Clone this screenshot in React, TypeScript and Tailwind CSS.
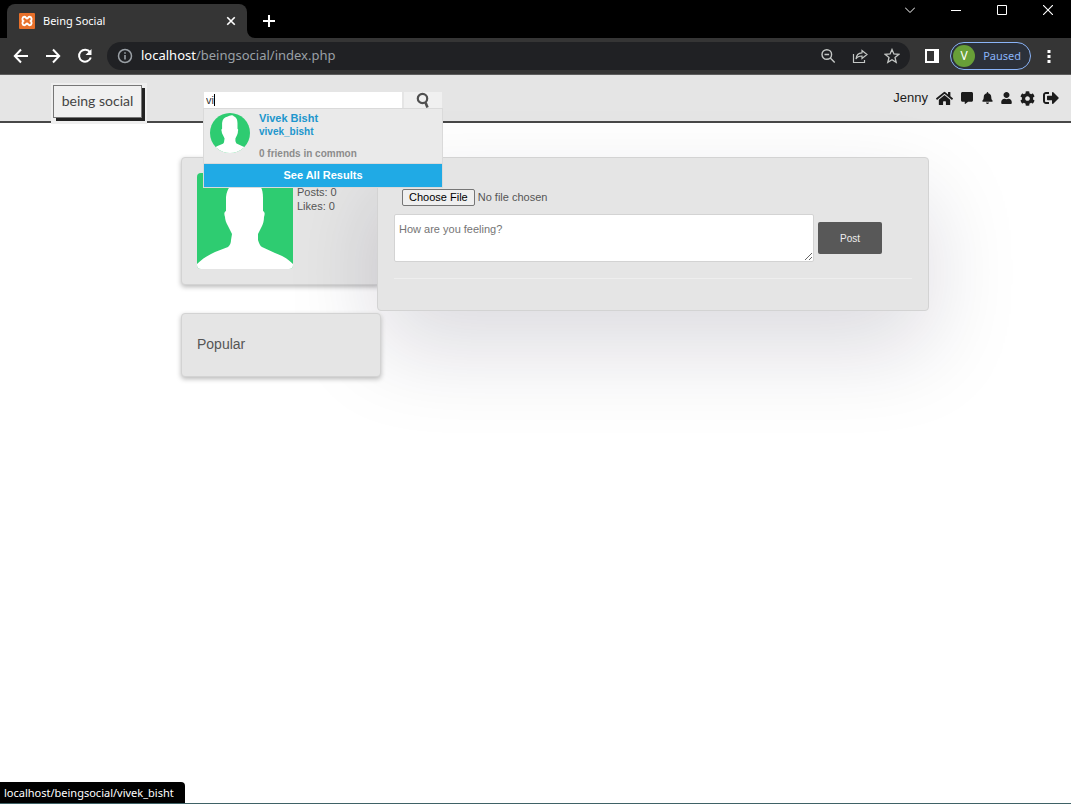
import React from 'react';
import {
  FaBell,
  FaCog,
  FaCommentAlt,
  FaHome,
  FaSignOutAlt,
  FaUser,
} from 'react-icons/fa';

function Avatar({ className }: { className: string }) {
  return (
    <svg viewBox="0 0 96 96" className={className} role="img" aria-label="Profile picture">
      <rect width="96" height="96" fill="#2ecc71" />
      <path
        fill="#fff"
        d="M29 24C30 15 34 11 41 9C47 6 54 3 57 8C63 11 66 15 66 25L66 38C68 39 68 41 67 44C67 48 66 51 65 53L61 61V67C62 70 63 73 65 74L78 80C86 83 91 86 96 91V96H0V91C5 86 10 83 18 79L31 74C33 72 34 70 34 67L35 61L31 53C29 50 28 46 28 44C27 41 27 39 29 38Z"
      />
    </svg>
  );
}

function Icon({ children, className = 'size-4' }: { children: React.ReactNode; className?: string }) {
  return (
    <svg
      viewBox="0 0 16 16"
      className={className}
      fill="none"
      stroke="currentColor"
      strokeWidth="2"
      aria-hidden="true"
    >
      {children}
    </svg>
  );
}

function TabStrip() {
  return (
    <div className="flex h-[38px] items-end bg-black pl-[7px] text-white">
      <div className="relative flex h-[34px] w-60 items-center rounded-t-lg bg-[#353535] pr-[11px] pl-3">
        <svg viewBox="0 0 16 16" className="size-4" aria-hidden="true">
          <rect width="16" height="16" rx="1" fill="#e8702a" />
          <path
            d="M5.3 3.8C3 3.8 3 7 4.3 8C3 9 3 12.2 5.3 12.2C7 12.2 7 10.5 8 10.5S9 12.2 10.7 12.2C13 12.2 13 9 11.7 8C13 7 13 3.8 10.7 3.8C9 3.8 9 5.5 8 5.5S7 3.8 5.300 3.8Z"
            fill="none"
            stroke="#fff"
            strokeWidth="1.900"
          />
        </svg>
        <span className="ml-2 flex-1 text-[11px]">Being Social</span>
        <button aria-label="Close tab">
          <Icon className="size-[10px]">
            <path d="M2 2l12 12M14 2L2 14" strokeWidth="2.600" />
          </Icon>
        </button>
        <svg viewBox="0 0 8 8" className="absolute bottom-0 left-full size-2" aria-hidden="true">
          <path d="M0 0A8 8 0 0 0 8 8H0Z" fill="#353535" />
        </svg>
      </div>
      <button aria-label="New tab" className="mb-[11px] ml-4">
        <Icon className="size-3">
          <path d="M8 0v16M0 8h16" strokeWidth="2.700" />
        </Icon>
      </button>
      <div className="ml-auto flex h-full items-start gap-9 pt-[5px] pr-[18px]">
        <button aria-label="Search tabs">
          <Icon className="size-[10px]">
            <path d="M0 4l8 8 8-8" strokeWidth="1.600" />
          </Icon>
        </button>
        <button aria-label="Minimize">
          <Icon className="size-[10px]">
            <path d="M0 8.800h16" strokeWidth="1.600" />
          </Icon>
        </button>
        <button aria-label="Maximize">
          <Icon className="size-[10px]">
            <path d="M.8.800h14.400v14.400H.8z" strokeWidth="1.600" />
          </Icon>
        </button>
        <button aria-label="Close">
          <Icon className="size-[10px]">
            <path d="M0 0l16 16M16 0L0 16" strokeWidth="1.800" />
          </Icon>
        </button>
      </div>
    </div>
  );
}

function Toolbar() {
  return (
    <div className="flex h-[37px] items-center border-b border-[#5c5c5c] bg-[#353535] pr-[20px] pl-[13px] text-white">
      <div className="flex items-center gap-4">
        <button aria-label="Back">
          <Icon>
            <path d="M15 8H2M8 1.500L1.800 8 8 14.500" />
          </Icon>
        </button>
        <button aria-label="Forward">
          <Icon>
            <path d="M1 8h13M8 1.500L14.200 8 8 14.500" />
          </Icon>
        </button>
        <button aria-label="Reload">
          <Icon>
            <path d="M13 4.200A6 6 0 1 0 13.800 9.500" />
            <path d="M14.500 1v6h-6z" fill="currentColor" stroke="none" />
          </Icon>
        </button>
      </div>
      <div className="ml-[14px] flex h-7 flex-1 items-center rounded-full bg-[#202124] pr-[10px] pl-[10px] text-[#c4c7c5]">
        <svg viewBox="0 0 16 16" className="size-4" fill="none" stroke="#9aa0a6" strokeWidth="1.500" aria-hidden="true">
          <circle cx="8" cy="8" r="6.500" />
          <path d="M8 7v4.500M8 4.300v1.500" strokeWidth="1.600" />
        </svg>
        <span className="ml-2 flex-1 text-[13px] text-[#9aa0a6]">
          <span className="text-white">localhost</span>/beingsocial/index.php
        </span>
        <div className="flex items-center gap-4">
          <button aria-label="Zoom">
            <Icon>
              <circle cx="6.800" cy="6.500" r="4.800" strokeWidth="1.400" />
              <path d="M10.300 10l4.400 4.500M4.500 6.500h4.600" strokeWidth="1.400" />
            </Icon>
          </button>
          <button aria-label="Share">
            <Icon>
              <path d="M1.500 6v8.500h11V12" strokeWidth="1.200" />
              <path d="M10 2.500l5 4-5 4V8C7 8 5 9 4 11c.300-4 2.500-6 6-6.200z" strokeWidth="1.200" />
            </Icon>
          </button>
          <button aria-label="Bookmark">
            <Icon>
              <path d="M8 1.500l1.900 4.500 4.800.4-3.700 3.100 1.200 4.800L8 11.700l-4.200 2.600L5 9.500 1.300 6.400 6.100 6z" strokeWidth="1.300" />
            </Icon>
          </button>
        </div>
      </div>
      <button aria-label="Side panel" className="ml-[15px]">
        <svg viewBox="0 0 14 14" className="size-[14px]" aria-hidden="true">
          <path d="M1 1h12v12H1z" fill="none" stroke="#fff" strokeWidth="2" />
          <path d="M9 1h4v12H9z" fill="#fff" />
        </svg>
      </button>
      <button className="ml-[11px] flex h-7 items-center gap-2 rounded-full border border-[#8ab4f8] bg-[#2c313a] pr-[9px] pl-[2px] text-[11px] text-[#8ab4f8]">
        <span className="grid size-[22px] place-items-center rounded-full bg-[#689f38] text-xs text-white">V</span>
        Paused
      </button>
      <button aria-label="Menu" className="ml-4">
        <svg viewBox="0 0 4 16" className="h-4 w-1" fill="#fff" aria-hidden="true">
          <path d="M.5 2h3v3h-3zM.5 7h3v3h-3zM.5 12h3v3h-3z" />
        </svg>
      </button>
    </div>
  );
}

function Search() {
  return (
    <form className="relative ml-[57px] w-[238px]" onSubmit={(e) => e.preventDefault()}>
      <div className="flex h-4 gap-[2px]">
        <div className="flex min-w-0 flex-1 items-center bg-white pl-[2px]">
          <input
            type="text"
            aria-label="Search"
            defaultValue="vi"
            autoComplete="off"
            className="h-4 bg-transparent text-[11px] text-[#333] outline-none [field-sizing:content]"
          />
          <span className="h-3 w-px bg-black" />
        </div>
        <button aria-label="Search" className="grid w-[38px] place-items-center bg-[#f0f0f0]">
          <svg viewBox="0 0 14 16" className="h-4 w-[14px]" fill="none" stroke="#505050" aria-hidden="true">
            <circle cx="6.500" cy="6.500" r="4.700" strokeWidth="2.200" />
            <path d="M9.500 10.500l2 5" strokeWidth="2.600" />
          </svg>
        </button>
      </div>
      <div className="absolute top-4 -right-px -left-px z-30 border border-[#dadada] bg-[#eaeaea] font-bold">
        <a href="#vivek_bisht" className="flex h-[54px] gap-2 pt-1 pl-[6px]">
          <Avatar className="size-10 rounded-full" />
          <span className="-mt-px flex flex-col pl-px text-[10px] leading-[14px] text-[#2096cd]">
            <span className="-mt-px text-[11px]">Vivek Bisht</span>
            <span>vivek_bisht</span>
            <span className="mt-2 text-[#8c8c8c]">0 friends in common</span>
          </span>
        </a>
        <a
          href="#results"
          className="block border-t border-[#dadada] bg-[#20aae5] text-center text-[11px] leading-[23px] text-white"
        >
          See All Results
        </a>
      </div>
    </form>
  );
}

function SiteHeader() {
  return (
    <header className="flex h-12 items-start border-b-2 border-[#484848] bg-[#e5e5e5] pr-[12px] pl-[51px]">
      <a href="#home" className="mt-2 h-[41px] w-24 bg-[#efefef] pt-[2px] pl-[2px]">
        <span className="block h-[33px] w-[89px] border border-[#777] bg-[#f0f0f0] text-center [font-family:Lato,sans-serif] text-[14px] leading-[30px] text-[#444] shadow-[3px_3px_0_#222]">
          being social
        </span>
      </a>
      <div className="pt-[17px]">
        <Search />
      </div>
      <nav className="ml-auto flex h-[46px] items-center text-[#1c1c1c]">
        <a href="#jenny" className="mr-2 text-[13px]">
          Jenny
        </a>
        <a href="#home" aria-label="Home" className="mr-2">
          <FaHome className="size-[17px]" />
        </a>
        <a href="#messages" aria-label="Messages" className="mr-[9px]">
          <FaCommentAlt className="size-3" />
        </a>
        <a href="#notifications" aria-label="Notifications" className="mr-2">
          <FaBell className="h-3 w-[11px]" />
        </a>
        <a href="#requests" aria-label="Friend requests" className="mr-2">
          <FaUser className="h-3 w-[11px]" />
        </a>
        <a href="#settings" aria-label="Settings" className="mr-2">
          <FaCog className="size-[15px]" />
        </a>
        <a href="#logout" aria-label="Log out">
          <FaSignOutAlt className="size-4" />
        </a>
      </nav>
    </header>
  );
}

export default function App() {
  return (
    <div className="flex min-h-screen flex-col border-b border-[#3f6266] bg-white font-['Liberation_Sans',Arial,sans-serif] text-[#555] [&_button]:shrink-0">
      <div className="font-['Noto_Sans','Open_Sans',sans-serif]">
        <TabStrip />
        <Toolbar />
      </div>
      <SiteHeader />
      <div className="flex flex-1 pl-[39px]">
        <main className="mx-auto mt-[34px] flex w-full max-w-[748px] items-start">
          <aside className="w-[200px] shrink-0">
            <section className="flex h-32 gap-1 rounded-sm border border-[#d3d3d3] bg-[#e5e5e5] p-[15px] text-[11px] leading-[14px] shadow-[0_2px_5px_#b9b9b9]">
              <Avatar className="size-24 rounded-sm" />
              <div className="pt-3">
                <p>Posts: 0</p>
                <p>Likes: 0</p>
              </div>
            </section>
            <section className="relative z-20 mt-7 h-16 rounded-sm border border-[#d3d3d3] bg-[#e5e5e5] px-[15px] shadow-[0_2px_5px_#b9b9b9]">
              <h2 className="text-[14px] leading-[61px]">Popular</h2>
            </section>
          </aside>
          <section className="relative z-10 -ml-1 h-[154px] min-w-0 flex-1 rounded-sm border border-[#d3d3d3] bg-[#e5e5e5] px-4 pt-[29px] text-[11px] shadow-[0_38px_90px_rgba(17,12,46,0.15)]">
            <form onSubmit={(e) => e.preventDefault()}>
              <input
                type="file"
                aria-label="Photo"
                className="ml-2 block h-5 leading-5 file:mr-[3px] file:h-[17px] file:rounded-xs file:border file:border-solid file:border-[#767676] file:bg-[#efefef] file:px-[6px] file:text-[11px] file:leading-[15px] file:text-black"
              />
              <div className="mt-[7px] flex items-center gap-1">
                <textarea
                  aria-label="Post text"
                  placeholder="How are you feeling?"
                  className="block h-12 w-[420px] min-w-0 resize rounded-xs border border-[#d3d3d3] bg-white px-1 pt-[7px] leading-[14px] placeholder:text-[#757575]"
                />
                <button className="h-8 w-16 rounded-xs bg-[#585858] text-[10px] text-[#eee]">Post</button>
              </div>
            </form>
            <hr className="mt-4 border-[#eee]" />
          </section>
        </main>
      </div>
      <div className="relative z-30 self-start rounded-tr-sm bg-black px-1 pr-[11px] font-['Noto_Sans','Open_Sans',sans-serif] text-[11px] leading-[21px] text-white">
        localhost/beingsocial/vivek_bisht
      </div>
    </div>
  );
}
